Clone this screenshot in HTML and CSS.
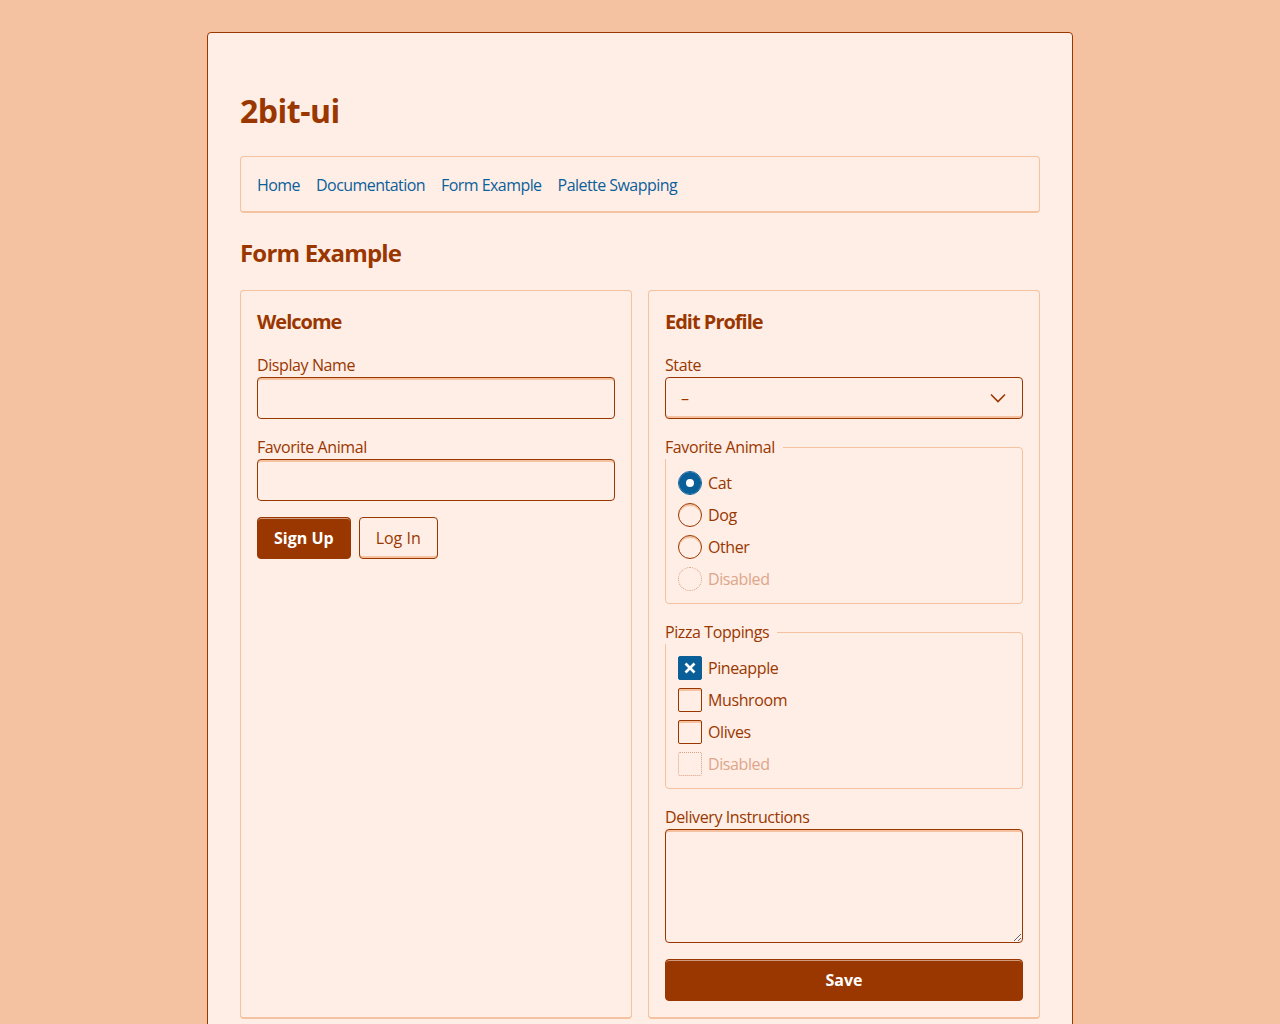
FILE: index.html
```html
<!DOCTYPE html>
<html lang="en">
<head>
<meta charset="utf-8">
<title>2bit-ui – Form Example</title>
<link rel="stylesheet" href="styles.css">
</head>
<body>
<main class="page">
  <h1 class="title">2bit-ui</h1>
  <nav class="nav">
    <a href="#">Home</a>
    <a href="#">Documentation</a>
    <a href="#">Form Example</a>
    <a href="#">Palette Swapping</a>
  </nav>
  <h2 class="section-title">Form Example</h2>
  <div class="columns">
    <section class="panel">
      <h3 class="panel-title">Welcome</h3>
      <label class="field-label" for="name">Display Name</label>
      <input class="text-input" id="name" type="text">
      <label class="field-label" for="animal">Favorite Animal</label>
      <input class="text-input" id="animal" type="text">
      <div class="btn-row">
        <button class="btn btn-primary" type="button">Sign Up</button>
        <button class="btn btn-outline" type="button">Log In</button>
      </div>
    </section>
    <section class="panel">
      <h3 class="panel-title">Edit Profile</h3>
      <label class="field-label" for="state">State</label>
      <div class="select-wrap">
        <select class="select" id="state"><option>–</option></select>
        <svg class="chevron" width="16" height="10" viewBox="0 0 16 10"><path d="M1 1.5 L8 8.5 L15 1.5" fill="none" stroke="#9a3700" stroke-width="1.6"/></svg>
      </div>
      <fieldset class="group">
        <legend class="group-legend">Favorite Animal</legend>
        <div class="group-body">
          <label class="choice"><span class="radio is-checked"></span>Cat</label>
          <label class="choice"><span class="radio"></span>Dog</label>
          <label class="choice"><span class="radio"></span>Other</label>
          <label class="choice is-disabled"><span class="radio is-disabled"></span>Disabled</label>
        </div>
      </fieldset>
      <fieldset class="group">
        <legend class="group-legend">Pizza Toppings</legend>
        <div class="group-body">
          <label class="choice"><span class="check is-checked"><svg width="24" height="24" viewBox="0 0 24 24"><path d="M7.5 7.5 L16.5 16.5 M16.5 7.5 L7.5 16.5" stroke="#fff" stroke-width="2.6" fill="none"/></svg></span>Pineapple</label>
          <label class="choice"><span class="check"></span>Mushroom</label>
          <label class="choice"><span class="check"></span>Olives</label>
          <label class="choice is-disabled"><span class="check is-disabled"></span>Disabled</label>
        </div>
      </fieldset>
      <label class="field-label" for="notes">Delivery Instructions</label>
      <textarea class="textarea" id="notes"></textarea>
      <button class="btn btn-primary btn-block" type="button">Save</button>
    </section>
  </div>
</main>
</body>
</html>
```
FILE: styles.css
```css
* { box-sizing: border-box; }

html, body {
  margin: 0;
  padding: 0;
}

body {
  background: #f4c2a1;
  color: #9a3700;
  font-family: "Segoe UI", "Open Sans", "Noto Sans", sans-serif;
  font-size: 16px;
  line-height: 24px;
  padding-top: 32px;
}

.page {
  width: 866px;
  margin: 0 auto;
  padding: 32px;
  background: #ffeee6;
  border: 1px solid #9a3700;
  border-radius: 4px;
  min-height: 1100px;
}

.title {
  font-size: 32px;
  line-height: 48px;
  font-weight: 700;
  margin: 22px 0 21px;
  letter-spacing: -0.5px;
}

.nav {
  display: flex;
  gap: 16px;
  padding: 16px 16px 14px;
  border: 1px solid #f4c2a1;
  border-bottom-width: 2px;
  border-radius: 4px;
}

.nav a {
  color: #0b5f9a;
  text-decoration: none;
  letter-spacing: -0.55px;
}

.section-title {
  font-size: 24px;
  line-height: 36px;
  font-weight: 700;
  margin: 21px 0 19px;
  padding-top: 1px;
  height: 37px;
  letter-spacing: -0.8px;
}

.columns {
  display: grid;
  grid-template-columns: 1fr 1fr;
  gap: 16px;
}

.panel {
  border: 1px solid #f4c2a1;
  border-bottom-width: 2px;
  border-radius: 4px;
  padding: 16px;
  display: flex;
  flex-direction: column;
}

.panel-title {
  font-size: 20px;
  line-height: 30px;
  font-weight: 700;
  margin: 0 0 16px;
  letter-spacing: -1px;
}

.field-label {
  display: block;
  letter-spacing: -0.4px;
}

.text-input,
.select,
.textarea {
  display: block;
  width: 100%;
  font: inherit;
  color: #9a3700;
  background: #ffeee6;
  border: 1px solid #9a3700;
  border-radius: 4px;
  margin: 0 0 16px;
}

.text-input {
  height: 42px;
  padding: 8px 12px;
  box-shadow: inset 0 2px 0 #f4c2a1;
}

.textarea {
  height: 114px;
  padding: 8px 12px;
  box-shadow: inset 0 2px 0 #f4c2a1;
  resize: vertical;
}

.select-wrap {
  position: relative;
  margin: 0 0 16px;
}

.select {
  appearance: none;
  -webkit-appearance: none;
  height: 42px;
  padding: 8px 40px 8px 15px;
  margin: 0;
  box-shadow: inset 0 -2px 0 #f4c2a1;
}

.chevron {
  position: absolute;
  right: 17px;
  top: 16px;
  pointer-events: none;
}

.btn-row {
  display: flex;
  gap: 8px;
}

.btn {
  font: inherit;
  height: 42px;
  padding: 8px 16px;
  border-radius: 4px;
  border: 1px solid #9a3700;
  cursor: pointer;
}

.btn-primary {
  background: #9a3700;
  color: #ffffff;
  font-weight: 700;
  box-shadow: inset 0 1px 0 rgba(255, 238, 230, 0.55);
}

.btn-outline {
  background: transparent;
  color: #9a3700;
  box-shadow: inset 0 -2px 0 #f4c2a1;
}

.btn-block {
  width: 100%;
}

.group {
  border: 1px solid #f4c2a1;
  border-radius: 4px;
  margin: 0 0 16px;
  padding: 0;
  min-width: 0;
}

.group-legend {
  padding: 0 8px 0 0;
  margin-left: -1px;
  letter-spacing: -0.4px;
}

.group-body {
  display: flex;
  flex-direction: column;
  gap: 8px;
  padding: 12px;
}

.choice {
  display: flex;
  align-items: center;
  gap: 6px;
  height: 24px;
  letter-spacing: -0.4px;
}

.choice.is-disabled {
  color: #dca68b;
}

.radio,
.check {
  flex: none;
  display: block;
  width: 24px;
  height: 24px;
  border: 1px solid #9a3700;
  box-shadow: inset 0 2px 0 #f4c2a1;
  background: #ffeee6;
}

.radio {
  border-radius: 50%;
}

.check {
  border-radius: 2px;
}

.check svg {
  display: block;
  margin: -1px;
}

.radio.is-checked {
  border-color: #0a5f99;
  background: #ffffff;
  box-shadow: inset 0 0 0 7px #0a5f99;
}

.check.is-checked {
  border-color: #0a5f99;
  background: #0a5f99;
  box-shadow: none;
}

.radio.is-disabled,
.check.is-disabled {
  border: 1px dotted #d9a083;
  box-shadow: none;
}
```
